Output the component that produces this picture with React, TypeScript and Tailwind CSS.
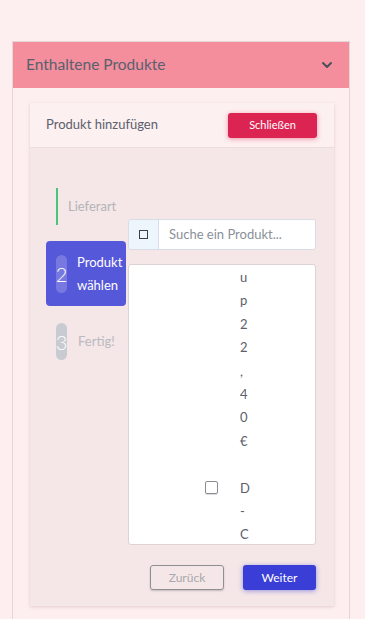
import React from "react";

const font = { fontFamily: "Lato, 'Noto Sans', sans-serif" };

export default function App() {
  const row1 = ["u", "p", "2", "2", ",", "4", "0", "€"];
  const row2 = ["D", "-", "C"];
  return (
    <div className="w-[365px] h-[619px] overflow-hidden bg-[#fdefef] pt-[41px] pl-[12px]" style={font}>
      <div className="w-[338px] h-[600px] border border-[#e8d6d6] bg-[#fdefef]">
        <div className="h-[46px] bg-[#f48e9d] flex items-center justify-between pl-[13px] pr-[16px]">
          <span className="text-[15.5px] text-[#59606d]">Enthaltene Produkte</span>
          <svg width="12" height="8" viewBox="0 0 12 8" fill="none">
            <path d="M2 2l4 4 4-4" stroke="#4a505d" strokeWidth="2" strokeLinecap="round" strokeLinejoin="round" />
          </svg>
        </div>
        <div className="pt-[15px] pl-[17px]">
          <div className="w-[304px] shadow-[0_1px_3px_rgba(180,140,140,0.35)]">
            <div className="h-[45px] bg-[#fdf0f0] border-b border-[#eddcdc] flex items-center justify-between pl-[16px] pr-[17px]">
              <span className="text-[13px] text-[#5b606c]">Produkt hinzufügen</span>
              <button className="w-[89px] h-[25px] rounded-[3px] bg-[#dc2453] text-white text-[11px] shadow-[0_1px_5px_rgba(220,36,83,0.45)]">
                Schließen
              </button>
            </div>
            <div className="h-[458px] bg-[#f5e7e7] flex pl-[16px]">
              <div className="w-[80px] pt-[40px] flex flex-col">
                <div className="h-[37px] flex items-center">
                  <div className="ml-[10px] w-[2px] h-[37px] bg-[#4cc27a]" />
                  <span className="ml-[10px] text-[13px] text-[#b3b3b8]">Lieferart</span>
                </div>
                <div className="mt-[16px] h-[65px] rounded-[4px] bg-[#5558d9] flex items-center">
                  <div className="ml-[10px] w-[11px] h-[38px] rounded-full bg-[rgba(255,255,255,0.2)] flex items-center justify-center text-white text-[20px] font-light">
                    2
                  </div>
                  <div className="ml-[10px] text-[13px] leading-[23px] text-white">
                    Produkt
                    <br />
                    wählen
                  </div>
                </div>
                <div className="mt-[17px] h-[37px] flex items-center">
                  <div className="ml-[10px] w-[11px] h-[37px] rounded-full bg-[#c9cbd2] flex items-center justify-center text-white text-[20px] font-light">
                    3
                  </div>
                  <span className="ml-[11px] text-[13px] text-[#b9b9be]">Fertig!</span>
                </div>
              </div>
              <div className="ml-[2px] w-[188px] pt-[71px] flex flex-col">
                <div className="h-[31px] flex rounded-[3px] border border-[#d8dde5] overflow-hidden">
                  <div className="w-[30px] bg-[#eef6fd] border-r border-[#d8dde5] flex items-center justify-center">
                    <div className="w-[9px] h-[9px] border-[1.5px] border-[#3a3f48]" />
                  </div>
                  <div className="flex-1 bg-white flex items-center pl-[10px] text-[13px] text-[#8b9099]">
                    Suche ein Produkt...
                  </div>
                </div>
                <div className="mt-[14px] h-[281px] bg-white border border-[#ddd3d3] rounded-[3px] overflow-hidden relative">
                  <div className="absolute left-[111px] top-[1px] text-[13px] leading-[23.4px] text-[#5b606c] flex flex-col">
                    {row1.map((c, i) => (
                      <span key={"a" + i}>{c}</span>
                    ))}
                    <span>&nbsp;</span>
                    {row2.map((c, i) => (
                      <span key={"b" + i}>{c}</span>
                    ))}
                  </div>
                  <div className="absolute left-[76px] top-[216px] w-[13px] h-[13px] rounded-[2px] border border-[#8a8d94] shadow-[0_1px_1px_rgba(0,0,0,0.15)]" />
                </div>
                <div className="mt-[20px] flex justify-end gap-[19px]">
                  <button className="w-[74px] h-[25px] rounded-[3px] border border-[#8f8f93] text-[12px] text-[#a8a8ad] shadow-[0_1px_2px_rgba(0,0,0,0.2)]">
                    Zurück
                  </button>
                  <button className="w-[73px] h-[25px] rounded-[3px] bg-[#3a3dd6] text-white text-[12px] shadow-[0_1px_5px_rgba(58,61,214,0.5)]">
                    Weiter
                  </button>
                </div>
              </div>
            </div>
          </div>
        </div>
      </div>
    </div>
  );
}
